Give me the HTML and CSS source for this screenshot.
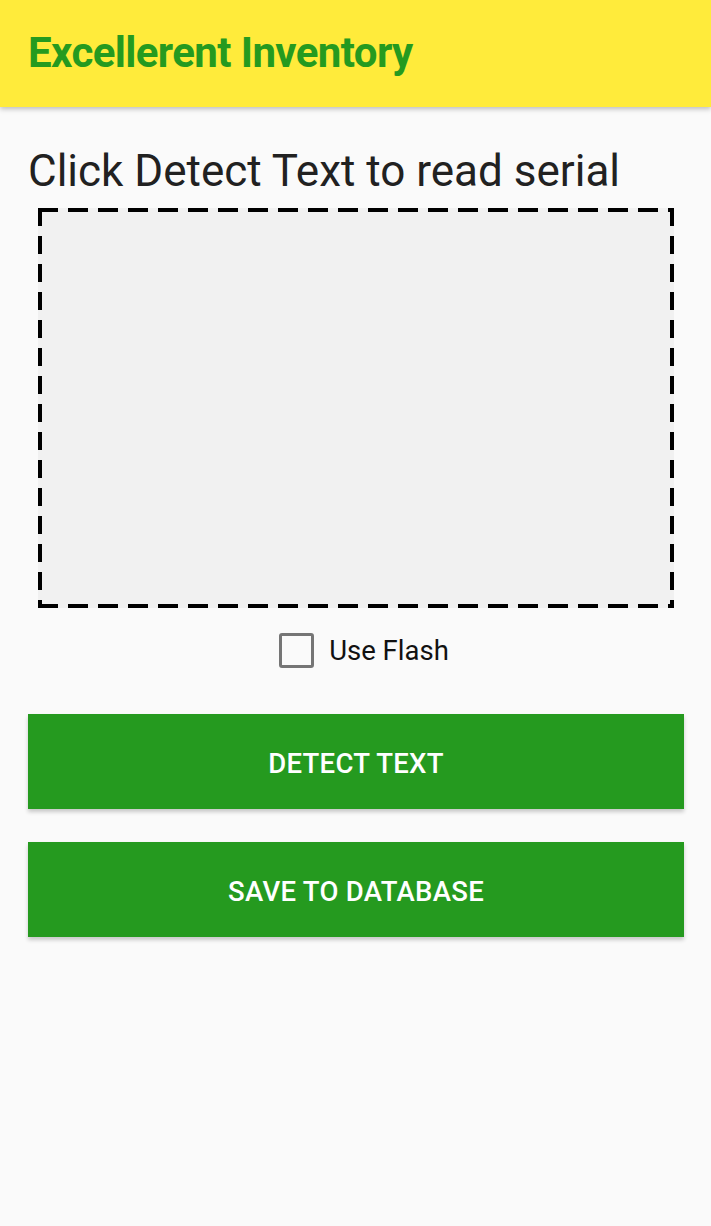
FILE: index.html
```html
<!DOCTYPE html>
<html>
<head>
<meta charset="utf-8">
<link rel="stylesheet" href="styles.css">
</head>
<body>
<header class="appbar">
  <h1 class="appbar-title">Excellerent Inventory</h1>
</header>
<main class="content">
  <p class="instructions">Click Detect Text to read serial</p>
  <div class="preview"></div>
  <label class="flash">
    <span class="checkbox"></span>
    <span class="flash-label">Use Flash</span>
  </label>
  <button class="btn">DETECT TEXT</button>
  <button class="btn">SAVE TO DATABASE</button>
</main>
</body>
</html>
```

FILE: styles.css
```css
* { box-sizing: border-box; }
html, body { margin: 0; padding: 0; }
body {
  width: 711px;
  height: 1226px;
  background: #fafafa;
  font-family: Roboto, "Noto Sans", sans-serif;
  overflow: hidden;
}
.appbar {
  height: 107px;
  background: #ffeb3b;
  display: flex;
  align-items: center;
  padding: 0 28px;
  box-shadow: 0 2px 5px rgba(0,0,0,0.25);
  position: relative;
}
.appbar-title {
  margin: 0;
  font-size: 42px;
  line-height: 50px;
  font-weight: 700;
  color: #259a1f;
  letter-spacing: -0.6px;
  padding-bottom: 2px;
}
.content {
  padding: 0 27px 0 28px;
  display: flex;
  flex-direction: column;
}
.instructions {
  margin: 37px 0 0 0;
  font-size: 44px;
  line-height: 54px;
  color: #212121;
}
.preview {
  margin: 10px 10px 0 10px;
  height: 400px;
  background:
    repeating-linear-gradient(to right, #000 0 20px, transparent 20px 30px) left top / 100% 4px no-repeat,
    repeating-linear-gradient(to right, #000 0 20px, transparent 20px 30px) left bottom / 100% 4px no-repeat,
    repeating-linear-gradient(to bottom, #000 0 18px, transparent 18px 28px) left top / 4px 100% no-repeat,
    repeating-linear-gradient(to bottom, #000 0 18px, transparent 18px 28px) right top / 4px 100% no-repeat,
    #f1f1f1;
}
.flash {
  align-self: center;
  display: flex;
  align-items: center;
  gap: 15px;
  margin: 25px 0 0 16px;
}
.checkbox {
  width: 35px;
  height: 35px;
  border: 3px solid #757575;
  border-radius: 3px;
}
.flash-label {
  font-size: 27.5px;
  color: #111;
}
.btn {
  height: 95px;
  border: none;
  background: #259a1f;
  color: #fff;
  font-family: Roboto, sans-serif;
  font-weight: 500;
  font-size: 27.5px;
  letter-spacing: 0.3px;
  box-shadow: 0 3px 4px rgba(0,0,0,0.2);
  padding: 4px 0 0 0;
}
.flash + .btn { margin-top: 46px; }
.btn + .btn { margin-top: 33px; }
```
